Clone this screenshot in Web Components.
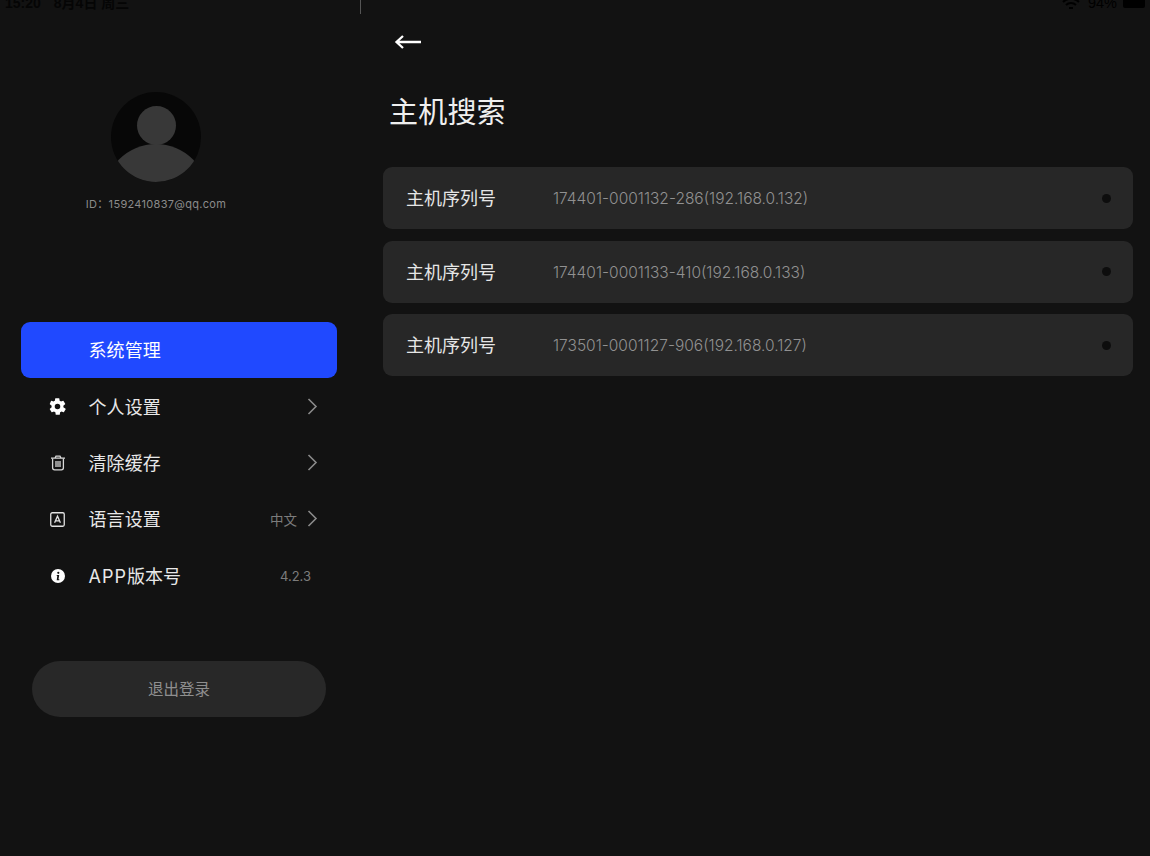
<!DOCTYPE html>
<html lang="zh"><head><meta charset="utf-8"><title>主机搜索</title>
<style>
html,body{margin:0;padding:0;background:#121212;}
body{width:1150px;height:856px;overflow:hidden;font-family:"Inter","Noto Sans CJK SC",sans-serif;}
</style></head><body>
<app-shell></app-shell>
<script>
const F='"Inter","Noto Sans CJK SC",sans-serif';
function def(name,html){
  customElements.define(name,class extends HTMLElement{
    constructor(){super();this.attachShadow({mode:'open'}).innerHTML=typeof html==='function'?html(this):html;}
  });
}
const chevron=`<svg width="12" height="18" viewBox="0 0 12 18" fill="none" stroke="#8a8a8a" stroke-width="1.6"><path d="M2.500 1 10 8.500 2.500 16"/></svg>`;
const icons={
 gear:`<svg width="19" height="19" viewBox="0 0 24 24"><path fill="#fff" fill-rule="evenodd" d="M19.4 13a7.600 7.600 0 0 0 0-2l2.200-1.700a.5.5 0 0 0 .1-.7l-2.100-3.600a.5.5 0 0 0-.6-.2l-2.600 1a7.700 7.700 0 0 0-1.700-1l-.4-2.800a.5.5 0 0 0-.5-.4h-4.200a.5.500 0 0 0-.5.4l-.4 2.800a7.700 7.700 0 0 0-1.700 1l-2.600-1a.5.5 0 0 0-.6.2L2.300 8.600a.5.5 0 0 0 .1.7L4.600 11a7.600 7.600 0 0 0 0 2l-2.200 1.700a.5.5 0 0 0-.1.7l2.100 3.600c.1.2.4.3.6.2l2.600-1c.5.4 1.100.7 1.700 1l.4 2.800c0 .2.3.4.5.4h4.200c.2 0 .5-.2.5-.4l.4-2.800c.6-.3 1.200-.6 1.700-1l2.600 1c.2.1.5 0 .6-.2l2.100-3.600a.5.5 0 0 0-.1-.7ZM12 15.500a3.500 3.500 0 1 1 0-7 3.500 3.500 0 0 1 0 7Z"/></svg>`,
 trash:`<svg width="16" height="16" viewBox="0 0 16 16" fill="none" stroke="#d8d8d8" stroke-width="1.3"><path d="M1 3.200h14M5 3 6 1.200h4L11 3"/><path d="M2.600 3.400v9.400c0 1.200.8 2 2 2h6.800c1.200 0 2-.8 2-2V3.400"/><path d="M6 6v6M8 6v6M10 6v6"/></svg>`,
 lang:`<svg width="15" height="15" viewBox="0 0 15 15" fill="none" stroke="#e2e2e2"><rect x=".75" y=".75" width="13.500" height="13.500" rx="1.500" stroke-width="1.300"/><path stroke-width="1.300" d="M4.600 10.800 7.500 4.200l2.900 6.600M5.600 8.800h3.800"/></svg>`,
 info:`<svg width="14" height="14" viewBox="0 0 14 14"><circle cx="7" cy="7" r="7" fill="#fff"/><circle cx="7.300" cy="3.800" r="1.100" fill="#121212"/><path d="M5.800 6h2.400l-.7 4.300h.8v.9H5.700l.6-4.300h-.6Z" fill="#121212"/></svg>`
};
def('status-bar',`<style>
:host{display:flex;height:14px;position:relative;color:#050505;font:600 14px/14px "Liberation Sans","Noto Sans CJK SC",sans-serif;overflow:hidden}
.l{display:flex;gap:13px;margin:-4px 0 0 5px;white-space:pre}
.r{margin-left:auto;display:flex;align-items:flex-start;gap:6px;margin-top:-4px;padding-right:5px}
.div{position:absolute;left:360px;top:0;width:1px;height:14px;background:#555}
.bat{width:22px;height:12px;background:#000;border-radius:2px}
.p{font-size:14.500px;font-weight:400;color:#000;margin-left:2px}
svg{margin-top:3px;margin-left:1px}
</style><div class="l"><span>15:20</span><span>8月4日 周三</span></div><div class="div"></div>
<div class="r"><svg width="18" height="10" viewBox="0 0 18 10" fill="none" stroke="#000" stroke-width="2"><path d="M1 3a11.500 11.500 0 0 1 16 0M4 6a7 7 0 0 1 10 0M7 9h4"/></svg><span class="p">94%</span><div class="bat"></div></div>`);
def('user-profile',`<style>
:host{display:flex;flex-direction:column;align-items:center;width:312px;padding-top:78px;font-family:${F}}
svg{display:block}
.id{margin-top:14px;font-size:11px;line-height:16px;color:#8b8b8b;letter-spacing:.3px;white-space:nowrap}
</style><svg width="90" height="90" viewBox="0 0 90 90"><defs><clipPath id="c"><circle cx="45" cy="45" r="45"/></clipPath></defs><circle cx="45" cy="45" r="45" fill="#070707"/><circle cx="45.500" cy="33.500" r="19.500" fill="#383838"/><g clip-path="url(#c)"><circle cx="45" cy="104" r="52" fill="#383838"/></g></svg><div class="id"><slot></slot></div>`);
def('nav-item',el=>{
 const ic=el.getAttribute('icon'),v=el.getAttribute('value'),ch=el.hasAttribute('chev');
 return `<style>
:host{display:flex;align-items:center;height:56.4px;padding:0 19px 0 0;box-sizing:border-box;color:#e8e8e8;font:400 18px/24px ${F}}
:host([active]){background:#2049ff;border-radius:9px;color:#fff;}
.ic{width:68px;display:flex;justify-content:center;padding-left:5px;box-sizing:border-box;flex:none}
.ic span{display:flex;width:19px;justify-content:center}
.t{flex:1;white-space:nowrap;padding-top:2px;margin-left:-.5px;letter-spacing:.1px}
.v{font-size:13.500px;color:#7c7c7c;white-space:nowrap;padding-top:1px}
.c{display:flex;margin-left:9px}
.val-only{margin-right:7px;padding-top:0;font-size:13px}
</style><div class="ic"><span>${ic?icons[ic]:''}</span></div><div class="t"><slot></slot></div>${v?`<div class="v ${ch?'':'val-only'}">${v}</div>`:''}${ch?`<div class="c">${chevron}</div>`:''}`;
});
def('side-bar',`<style>
:host{display:flex;flex-direction:column;width:360px;box-sizing:border-box;padding-left:21px;padding-right:23px;font-family:${F}}
.nav{margin-top:110px;display:flex;flex-direction:column}
.wide{letter-spacing:1px}
.logout{margin:57px 11px 0;height:56px;padding-bottom:2px;box-sizing:border-box;border-radius:28px;background:#282828;color:#8f8f8f;display:flex;align-items:center;justify-content:center;font-size:15.500px}
user-profile{margin-left:-21px}
</style><user-profile>ID：1592410837@qq.com</user-profile>
<div class="nav"><nav-item active>系统管理</nav-item><nav-item icon="gear" chev>个人设置</nav-item><nav-item icon="trash" chev>清除缓存</nav-item><nav-item icon="lang" value="中文" chev>语言设置</nav-item><nav-item icon="info" value="4.2.3"><span class="wide">APP</span>版本号</nav-item></div>
<div class="logout">退出登录</div>`);
def('host-row',`<style>
:host{display:flex;align-items:center;height:62px;background:#272727;border-radius:9px;padding:0 22px 0 23px;box-sizing:border-box;font-family:${F}}
.k{width:147px;flex:none;font-size:18px;line-height:24px;color:#e6e6e6;padding-top:2px}
.s{flex:1;font-size:15.500px;line-height:24px;color:#919191;white-space:nowrap;font-weight:300;padding-top:2px}
.d{width:9px;height:9px;border-radius:50%;background:#0d0d0d;flex:none}
</style><div class="k">主机序列号</div><div class="s"><slot></slot></div><div class="d"></div>`);
def('host-search',`<style>
:host{display:flex;flex-direction:column;flex:1;padding:0 17px 0 23px;box-sizing:border-box;font-family:${F}}
.back{display:block;margin:13px 0 0 11px;height:30px}
h1{margin:35px 0 0 6px;font-weight:400;font-size:29px;line-height:42px;color:#efefef;letter-spacing:.2px}
.list{margin-top:33px;display:flex;flex-direction:column;gap:11.500px}
</style><svg class="back" width="28" height="30" viewBox="0 0 28 30" fill="none" stroke="#fff" stroke-width="2.300"><path d="M2 15h25M9 9l-6.500 6 6.500 6"/></svg><h1>主机搜索</h1>
<div class="list"><host-row>174401-0001132-286(192.168.0.132)</host-row><host-row>174401-0001133-410(192.168.0.133)</host-row><host-row>173501-0001127-906(192.168.0.127)</host-row></div>`);
def('app-shell',`<style>
:host{display:block;width:1150px;height:856px;background:#121212;overflow:hidden}
.m{display:flex}
</style><status-bar></status-bar><div class="m"><side-bar></side-bar><host-search></host-search></div>`);
</script></body></html>
